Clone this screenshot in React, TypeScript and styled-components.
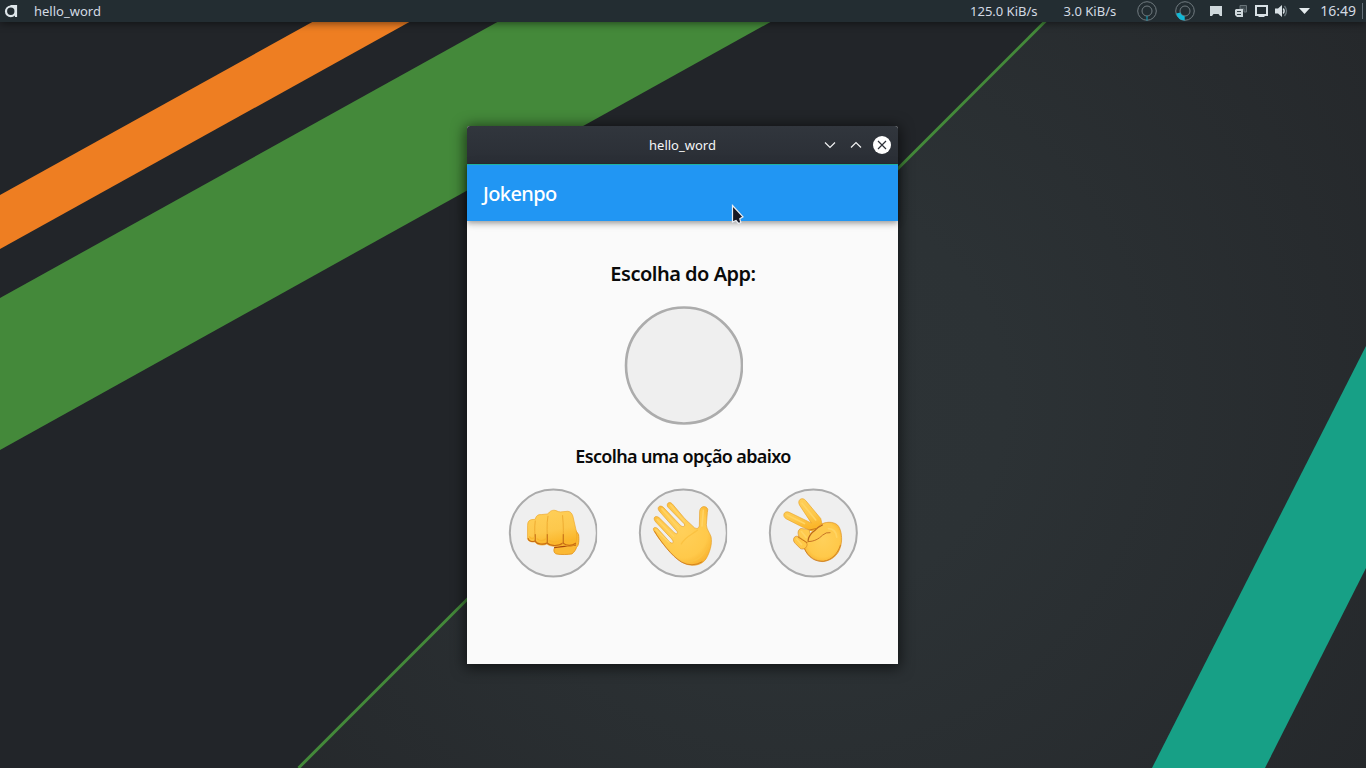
import React from 'react';
import styled, { createGlobalStyle } from 'styled-components';

const GlobalStyle = createGlobalStyle`
  * { box-sizing: border-box; }
  body { margin: 0; overflow: hidden; background: #222529; font-family: 'Noto Sans', 'Open Sans', sans-serif; }
`;

const Desktop = styled.div`
  position: relative;
  width: 1366px;
  height: 768px;
  overflow: hidden;
  display: flex;
  flex-direction: column;
  align-items: center;
`;

const WallpaperSvg = styled.svg`
  position: absolute;
  inset: 0;
`;

const Panel = styled.header`
  position: relative;
  width: 100%;
  height: 22px;
  flex: none;
  display: flex;
  align-items: center;
  padding: 0 3px 0 4px;
  background: #232d32;
  color: #d3dae3;
  font-size: 13px;
  line-height: 22px;
  box-shadow: 0 1px 8px rgba(0, 0, 0, 0.55);
`;

const PanelTitle = styled.span`
  margin-left: 15px;
  flex: 1;
`;

const Reading = styled.span<{ $gap: number }>`
  margin-right: ${(p) => p.$gap}px;
  white-space: nowrap;
`;

const Clock = styled.time`
  font-size: 14px;
`;

const TrayIcon = styled.svg<{ $gap: number }>`
  flex: none;
  margin-right: ${(p) => p.$gap}px;
`;

const Divider = styled.i`
  width: 1px;
  height: 16px;
  margin-left: 6px;
  background: #66717a;
`;

const Window = styled.main`
  position: relative;
  margin: 104px 1px 0 0;
  width: 431px;
  height: 538px;
  display: flex;
  flex-direction: column;
  border-radius: 3px 3px 0 0;
  background: #fafafa;
  box-shadow: 0 2px 14px 2px rgba(0, 0, 0, 0.6);
`;

const TitleBar = styled.div`
  height: 38px;
  flex: none;
  display: grid;
  grid-template-columns: 1fr auto 1fr;
  align-items: center;
  padding-right: 7px;
  padding-left: 7px;
  border-radius: 3px 3px 0 0;
  background: linear-gradient(#31363d, #2a2e35);
  color: #f4f5f6;
  font-size: 13px;
`;

const WindowTitle = styled.span`
  grid-column: 2;
`;

const Controls = styled.div`
  display: flex;
  justify-content: flex-end;
  align-items: center;
  gap: 8px;
`;

const AppBar = styled.div`
  position: relative;
  height: 57px;
  flex: none;
  display: flex;
  align-items: center;
  padding: 0 16px;
  border-top: 1px solid #1fb2a0;
  background: #2196f3;
  color: #fff;
  font-size: 20px;
  font-weight: 500;
  letter-spacing: -0.6px;
  box-shadow: 0 2px 4px -1px rgba(0, 0, 0, 0.2), 0 4px 5px rgba(0, 0, 0, 0.14), 0 1px 10px rgba(0, 0, 0, 0.12);
`;

const Content = styled.section`
  flex: 1;
  display: flex;
  flex-direction: column;
  align-items: center;
  padding: 39px 0 0 1px;
`;

const Heading = styled.h2<{ $size: number; $spacing: number }>`
  margin: 0;
  height: 28px;
  line-height: 28px;
  color: #0a0a0a;
  font-size: ${(p) => p.$size}px;
  font-weight: 600;
  letter-spacing: ${(p) => p.$spacing}px;
  white-space: nowrap;
`;

const AppChoice = styled.svg`
  display: block;
  margin: 18px 0 17px;
`;

const Options = styled.div`
  display: flex;
  gap: 40.25px;
  margin-top: 17.5px;
`;

const OptionButton = styled.button`
  width: 90px;
  height: 90px;
  padding: 0;
  border: 0;
  background: none;
`;

const OptionSvg = styled.svg`
  display: block;
`;

const Pointer = styled.svg`
  position: absolute;
  left: 264px;
  top: 78px;
`;

function Wallpaper() {
  return (
    <WallpaperSvg width="1366" height="768" viewBox="0 0 1366 768">
      <defs>
        <radialGradient id="sheen" gradientUnits="userSpaceOnUse" cx="800" cy="400" r="680">
          <stop offset="0" stopColor="#2d3336" />
          <stop offset="0.3" stopColor="#2c3235" />
          <stop offset="1" stopColor="#25282b" />
        </radialGradient>
      </defs>
      <path d="M0 0H1366V768H0Z" fill="#222529" />
      <path d="M1067 0H1366V768H299Z" fill="url(#sheen)" />
      <path d="M352 0H449L0 249V195Z" fill="#ee7e22" />
      <path d="M537 0H810L0 450V298Z" fill="#44893a" />
      <path d="M1066.500 0L298.500 768" stroke="#44893a" strokeWidth="3" />
      <path d="M1366 346V568L1265 768H1152Z" fill="#17a086" />
    </WallpaperSvg>
  );
}

function Gauge({ busy, gap }: { busy?: boolean; gap: number }) {
  return (
    <TrayIcon $gap={gap} width="20" height="20" viewBox="0 0 20 20" fill="none">
      <circle cx="10" cy="10" r="9.300" stroke="#717b80" />
      <circle cx="10" cy="10" r="5" stroke="#717b80" />
      {busy ? (
        <path d="M1.200 12.500L5.300 11.500A5 5 0 0 0 9.700 15.200V19.500A9.300 9.300 0 0 1 1.200 12.500Z" fill="#12b8d6" />
      ) : (
        <path d="M10 15V19.500" stroke="#12a5c0" />
      )}
    </TrayIcon>
  );
}

function Disc({ children, clip }: { children: React.ReactNode; clip?: boolean }) {
  return (
    <OptionSvg width="90" height="90" viewBox="0 0 270 270">
      <defs>
        <clipPath id="discEdge"><path d="M0 0H267.500V270H0Z" /></clipPath>
        <linearGradient id="skin" x1="0" y1="0" x2="0.3" y2="1">
          <stop offset="0" stopColor="#ffd05a" />
          <stop offset="0.65" stopColor="#fdc84c" />
          <stop offset="1" stopColor="#fbb62a" />
        </linearGradient>
        <radialGradient id="palm" cx="0.5" cy="0.45" r="0.62">
          <stop offset="0" stopColor="#ffd05a" />
          <stop offset="0.7" stopColor="#ffc94a" />
          <stop offset="1" stopColor="#f8b02c" />
        </radialGradient>
      </defs>
      <circle cx="136" cy="135" r="130.500" fill="#efefef" stroke="#ababab" strokeWidth="6" clipPath={clip ? 'url(#discEdge)' : undefined} />
      {children}
    </OptionSvg>
  );
}

function Fist() {
  return (
    <Disc clip>
      <g transform="translate(-23.250 -23.250)" strokeLinejoin="round" strokeLinecap="round">
        <path d="M164 201C158 208 161 219 168 221C183 224 201 223 215 221C222 216 227 208 229 201C236 196 237 179 235 163L226 150Z" fill="#fbb934" stroke="#e2931a" strokeWidth="2.500" />
        <path d="M163 202C180 199 202 199 226 194" fill="none" stroke="#a9480c" strokeWidth="3.500" />
        <path d="M82 134C82 124 87 119 95 118L105 117C107 107 113 102 123 103L143 101C149 92 157 88 167 91Q174 95 181 95L203 93C211 94 215 99 218 108L228 152C231 171 229 184 225 193C213 200 197 200 188 192C178 200 151 201 140 191C130 197 109 195 104 185C94 187 84 183 82 177Z" fill="url(#skin)" stroke="#efa829" strokeWidth="2" />
        <path d="M84 175C86 183 96 186 104 182C111 193 130 194 140 188C151 199 177 198 188 188C198 198 216 197 226 189" fill="none" stroke="#c86b13" strokeWidth="3.500" />
        <path d="M105 122C102 142 104 165 105 183M143 108C138 131 142 162 141 190M187 106C190 136 190 166 188 190" fill="none" stroke="#efac31" strokeWidth="3" />
        <path d="M105 163V184M141 163V190M189 163V190" stroke="#b85b10" strokeWidth="2.500" />
        <path d="M88 170Q93 178 101 173M111 176Q124 186 136 176M148 181Q164 190 182 180M195 181Q210 189 222 177" fill="none" stroke="#f8b62f" strokeWidth="4" />
      </g>
    </Disc>
  );
}

function OpenHand() {
  return (
    <Disc clip>
      <g transform="translate(-6 -5.250)" strokeLinejoin="round" strokeLinecap="round">
        <path d="M56 137C47 128 54 119 64 126L99 165C104 172 114 173 111 164L107 158L59 107C49 96 57 85 69 94L113 137C121 145 127 144 123 135L70 75C61 64 71 54 82 63L133 117C140 124 149 121 145 113L96 63C89 53 99 43 109 53L147 98L176 125Q187 130 190 119L191 75C192 63 202 58 211 63Q218 67 214 79L211 116C212 130 221 139 225 151C230 174 220 201 210 218C199 234 177 241 155 235C134 229 116 211 103 198C88 180 67 158 56 137Z" fill="url(#palm)" stroke="#e5a02a" strokeWidth="2" />
        <path d="M56 136C76 168 107 210 137 228Q168 244 198 227" fill="none" stroke="#cf7a1a" strokeWidth="2.500" />
        <path d="M104 57L145 106M78 68L127 124M64 100L113 150M60 131L99 168M202 72L198 119" fill="none" stroke="#ffd365" strokeWidth="5" />
        <path d="M136 173C147 152 166 146 184 132M155 226C189 224 207 202 213 177" fill="none" stroke="#fbc242" strokeWidth="4" />
      </g>
    </Disc>
  );
}

function Victory() {
  return (
    <Disc>
      <g transform="translate(-6.750 -5.250)" strokeLinejoin="round" strokeLinecap="round">
        <path d="M101 56C93 41 109 30 120 43L165 97L171 123L137 134L113 124L62 98C48 91 54 72 70 78L136 110Z" fill="url(#skin)" stroke="#e9a52a" strokeWidth="2" />
        <path d="M165 115C178 106 202 105 215 116C226 127 229 151 227 168C223 199 206 222 171 226C143 223 125 208 116 187L132 145Z" fill="url(#palm)" stroke="#dd8f20" strokeWidth="2" />
        <path d="M116 187C128 215 149 227 174 225C198 221 216 203 224 177" fill="none" stroke="#cb7a1c" strokeWidth="2.500" />
        <path d="M96 150C83 147 79 163 89 172L104 187C114 191 124 185 124 174L119 162Z" fill="#ffc847" stroke="#d38423" strokeWidth="2" />
        <path d="M105 127C95 130 95 144 101 153L123 168C132 167 137 157 134 144L130 131Z" fill="#ffca4d" stroke="#d8932a" strokeWidth="2" />
        <path d="M127 165C125 150 132 139 148 129C164 119 182 115 195 124L206 138C193 135 181 137 172 145C160 156 145 165 127 165Z" fill="#fec94c" />
        <path d="M127 163C128 151 136 140 149 131Q157 122 170 116" fill="none" stroke="#b9651b" strokeWidth="3.500" />
        <path d="M127 166C145 166 159 158 170 147Q181 137 193 139" fill="none" stroke="#c67425" strokeWidth="3" />
        <path d="M109 51L150 101M64 86L116 112M93 158L107 175M107 136L121 153M188 127Q211 128 213 153" fill="none" stroke="#ffd463" strokeWidth="5" />
        <path d="M98 153L123 169M132 131L151 127" stroke="#cb7818" strokeWidth="3" />
      </g>
    </Disc>
  );
}

export default function App() {
  return (
    <>
      <GlobalStyle />
      <Desktop>
        <Wallpaper />
        <Panel>
          <svg width="15" height="16" viewBox="0 0 15 16" fill="none" stroke="#dfe7eb" strokeWidth="2.200">
            <path d="M6.500 3H12V14" />
            <circle cx="6.800" cy="8.300" r="4.800" />
          </svg>
          <PanelTitle>hello_word</PanelTitle>
          <Reading $gap={26}>125.0 KiB/s</Reading>
          <Reading $gap={21}>3.0 KiB/s</Reading>
          <Gauge gap={18} />
          <Gauge busy gap={15} />
          <TrayIcon $gap={13} width="12" height="10" viewBox="0 0 12 10">
            <path d="M0 0H12V10H10L8.500 8H3.500L2 10H0Z" fill="#cfd8dc" />
          </TrayIcon>
          <TrayIcon $gap={8} width="12" height="12" viewBox="0 0 12 12">
            <path d="M5 .500H11.500V7H9V4H5Z" fill="#3c474c" stroke="#697479" />
            <path d="M1 4H8V12H2L0 10V5Z" fill="#cfd8dc" />
            <path d="M2 6.500H6M2 9.500H6" stroke="#344147" />
          </TrayIcon>
          <TrayIcon $gap={7} width="13" height="12" viewBox="0 0 13 12">
            <path d="M1 1H12V10H1Z" fill="none" stroke="#d8e0e4" strokeWidth="2" />
            <path d="M3.500 9H9.500V12H3.500Z" fill="#d8e0e4" />
          </TrayIcon>
          <TrayIcon $gap={11} width="13" height="12" viewBox="0 0 13 12">
            <path d="M0 3.500H3L7 0V12L3 8.500H0Z" fill="#d8e0e4" />
            <path d="M8.300 3.500Q10 6 8.300 8.500" fill="none" stroke="#d8e0e4" strokeWidth="1.400" />
            <path d="M9.500 1Q13.500 6 9.500 11" fill="none" stroke="#68757b" strokeWidth="1.300" />
          </TrayIcon>
          <TrayIcon $gap={10} width="11" height="6" viewBox="0 0 11 6">
            <path d="M0 0H11L5.500 6Z" fill="#e4ebee" />
          </TrayIcon>
          <Clock>16:49</Clock>
          <Divider />
        </Panel>

        <Window>
          <TitleBar>
            <WindowTitle>hello_word</WindowTitle>
            <Controls>
              <svg width="18" height="18" viewBox="0 0 18 18" fill="none" stroke="#f1f2f3" strokeWidth="1.200">
                <path d="M4 6.500L9 11.500L14 6.500" />
              </svg>
              <svg width="18" height="18" viewBox="0 0 18 18" fill="none" stroke="#f1f2f3" strokeWidth="1.200">
                <path d="M4 11.500L9 6.500L14 11.500" />
              </svg>
              <svg width="18" height="18" viewBox="0 0 18 18" fill="none">
                <circle cx="9" cy="9" r="9" fill="#fff" />
                <path d="M5 5L13 13M13 5L5 13" stroke="#2d3138" strokeWidth="1.200" />
              </svg>
            </Controls>
          </TitleBar>
          <AppBar>Jokenpo</AppBar>
          <Content>
            <Heading $size={20} $spacing={-0.5}>Escolha do App:</Heading>
            <AppChoice width="119" height="119" viewBox="0 0 119 119">
              <circle cx="60" cy="59.500" r="58" fill="#efefef" stroke="#acacac" strokeWidth="2.600" />
            </AppChoice>
            <Heading $size={18} $spacing={-0.64}>Escolha uma opção abaixo</Heading>
            <Options>
              <OptionButton><Fist /></OptionButton>
              <OptionButton><OpenHand /></OptionButton>
              <OptionButton><Victory /></OptionButton>
            </Options>
          </Content>
          <Pointer width="16" height="22" viewBox="0 0 16 22">
            <path d="M1.500 1.500L12 12.800L8.800 14.800L9.800 18.500L7.500 19.500L5 16.500L1.500 18Z" fill="#171925" stroke="#e9edf3" strokeWidth="1.200" />
          </Pointer>
        </Window>
      </Desktop>
    </>
  );
}
